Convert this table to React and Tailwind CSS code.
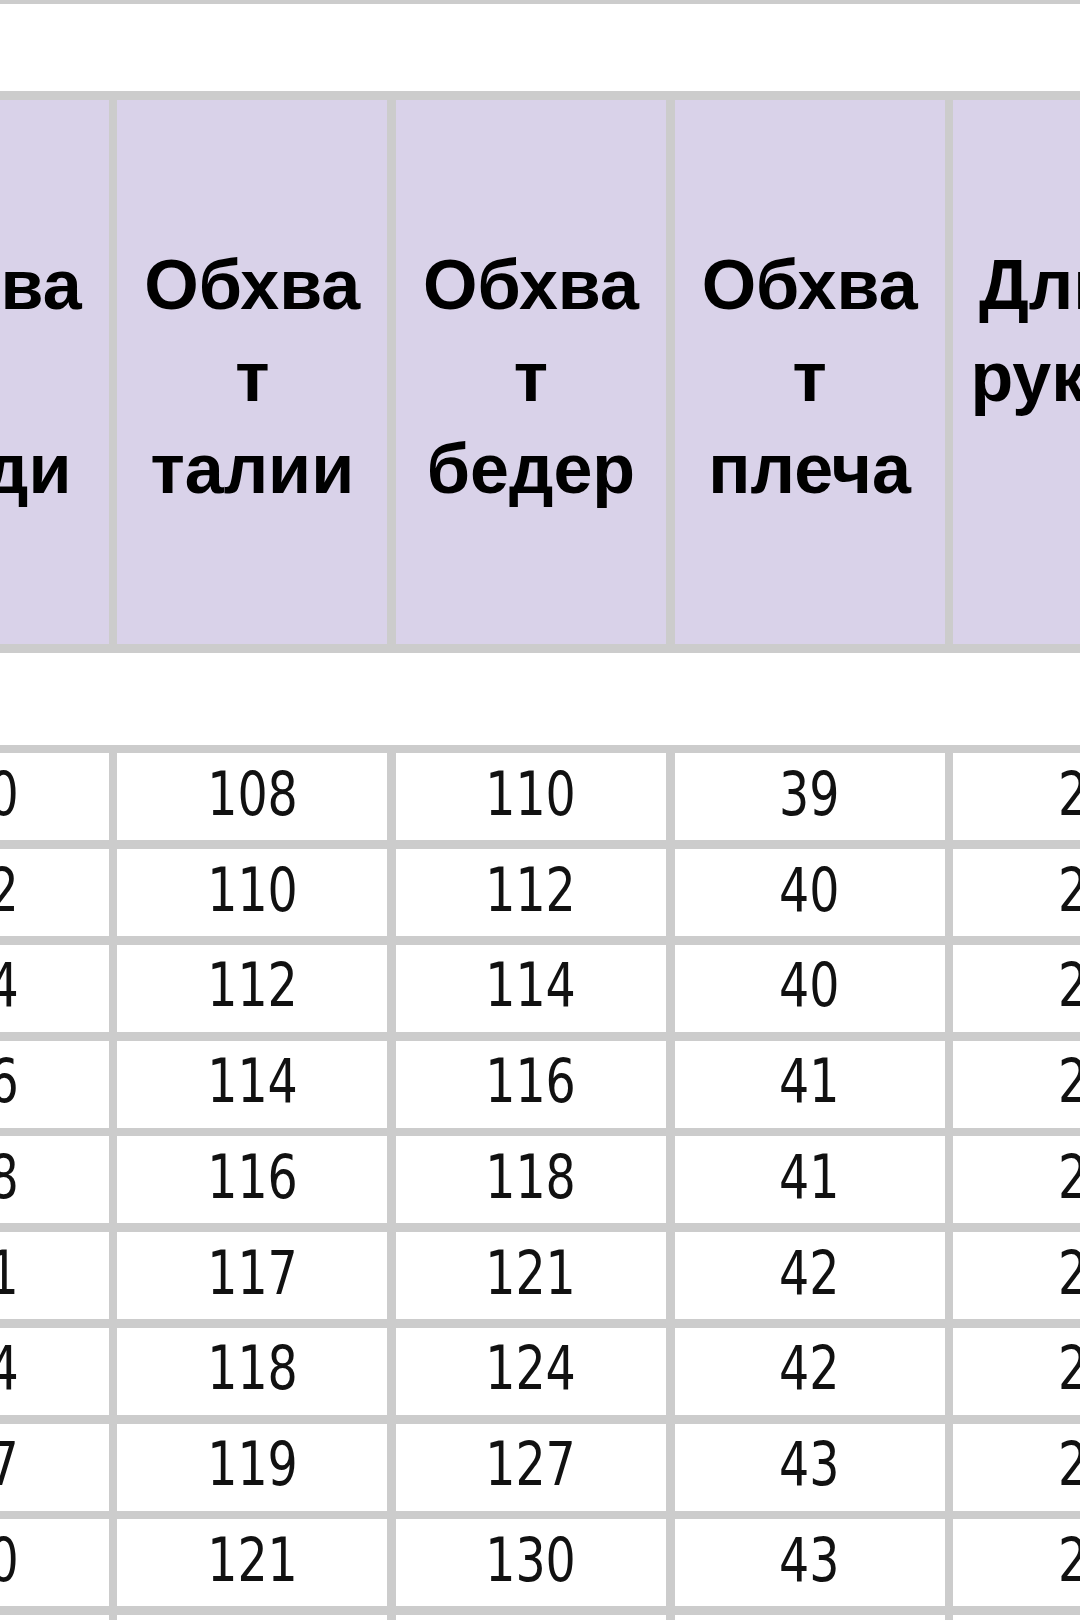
import React from 'react';

const headers = [
  ['Обхва', 'т', 'груди'],
  ['Обхва', 'т', 'талии'],
  ['Обхва', 'т', 'бедер'],
  ['Обхва', 'т', 'плеча'],
  ['Длина', 'рукава', '\u00a0'],
];

const rows = [
  [100, 108, 110, 39, 25],
  [102, 110, 112, 40, 25],
  [104, 112, 114, 40, 26],
  [106, 114, 116, 41, 26],
  [108, 116, 118, 41, 27],
  [111, 117, 121, 42, 27],
  [114, 118, 124, 42, 28],
  [117, 119, 127, 43, 28],
  [120, 121, 130, 43, 29],
  [123, 122, 133, 44, 29],
];

const HeaderCell = ({ lines }) => (
  <div className="bg-[#d9d2e9] flex flex-col items-center justify-center pt-[10px] text-[70px] leading-[92px] font-bold text-black [font-family:'Liberation_Sans',Arial,sans-serif] whitespace-nowrap">
    {lines.map((l, i) => (
      <span key={i}>{l}</span>
    ))}
  </div>
);

const Cell = ({ value }) => (
  <div className="bg-white h-[87px] flex items-center justify-center pb-[6px] text-[60px] text-[#111] [font-family:'DejaVu_Sans_Condensed','DejaVu_Sans',sans-serif] [font-stretch:condensed]">
    <span className="inline-block scale-x-[0.88]">{value}</span>
  </div>
);

export default function App() {
  return (
    <div className="w-[1080px] h-[1620px] overflow-hidden bg-white">
      <div className="ml-[-170px] w-[1420px] bg-[#cccccc] pt-[4px] flex flex-col gap-[8.78px]">
        <div className="h-[87px] bg-white" />
        <div className="grid grid-cols-[repeat(5,270px)] gap-x-[8.67px] px-[8.67px] h-[544px]">
          {headers.map((h, i) => (
            <HeaderCell key={i} lines={h} />
          ))}
        </div>
        <div className="h-[92px] bg-white" />
        {rows.map((r, i) => (
          <div key={i} className="grid grid-cols-[repeat(5,270px)] gap-x-[8.67px] px-[8.67px]">
            {r.map((v, j) => (
              <Cell key={j} value={v} />
            ))}
          </div>
        ))}
      </div>
    </div>
  );
}
